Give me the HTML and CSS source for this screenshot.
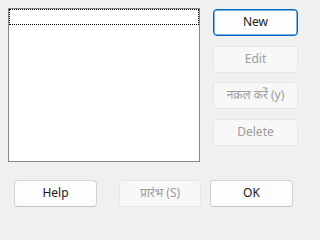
FILE: index.html
```html
<!DOCTYPE html>
<html>
<head>
<meta charset="utf-8">
<link rel="stylesheet" href="styles.css">
</head>
<body>
<div class="dialog">
  <div class="top">
    <div class="listbox">
      <div class="focus-row"></div>
    </div>
    <div class="side">
      <button class="btn default">New</button>
      <button class="btn" disabled>Edit</button>
      <button class="btn" disabled>नक़ल करें (y)</button>
      <button class="btn" disabled>Delete</button>
    </div>
  </div>
  <div class="bottom">
    <button class="btn">Help</button>
    <button class="btn start" disabled>प्रारंभ (S)</button>
    <button class="btn">OK</button>
  </div>
</div>
</body>
</html>
```
FILE: styles.css
```css
html, body {
  margin: 0;
  padding: 0;
  background: #f0f0f0;
  width: 307px;
  height: 222px;
  overflow: hidden;
}
.dialog {
  font-family: "Noto Sans", "Open Sans", sans-serif;
  font-size: 12px;
  color: #1b1b1b;
  padding: 8px 0 0 8px;
}
.top {
  display: flex;
  align-items: flex-start;
}
.listbox {
  width: 190px;
  height: 152px;
  border: 1px solid #868686;
  background: #fff;
}
.focus-row {
  height: 14px;
  border: 1px dotted #000;
}
.side {
  display: flex;
  flex-direction: column;
  gap: 9.5px;
  margin-left: 13px;
  margin-top: 1px;
}
.btn {
  box-sizing: border-box;
  width: 85px;
  height: 27px;
  padding: 0 0 1px 0;
  font-family: inherit;
  font-size: 12px;
  color: #1b1b1b;
  background: #fdfdfd;
  border: 1px solid #d3d3d3;
  border-bottom-color: #c0c0c0;
  border-radius: 4px;
  line-height: 1;
}
.btn:disabled {
  background: #f8f8f8;
  border-color: #e6e6e6;
  color: #9d9d9d;
}
.btn.default {
  border: 1px solid #0067c0;
  box-shadow: inset 0 0 0 0.5px #0067c0;
}
.bottom {
  display: flex;
  margin-top: 18px;
  margin-left: 6px;
}
.bottom .btn {
  width: 83px;
}
.bottom .start {
  margin-left: 22px;
  width: 82px;
}
.bottom .start + .btn {
  margin-left: 9px;
}
```
